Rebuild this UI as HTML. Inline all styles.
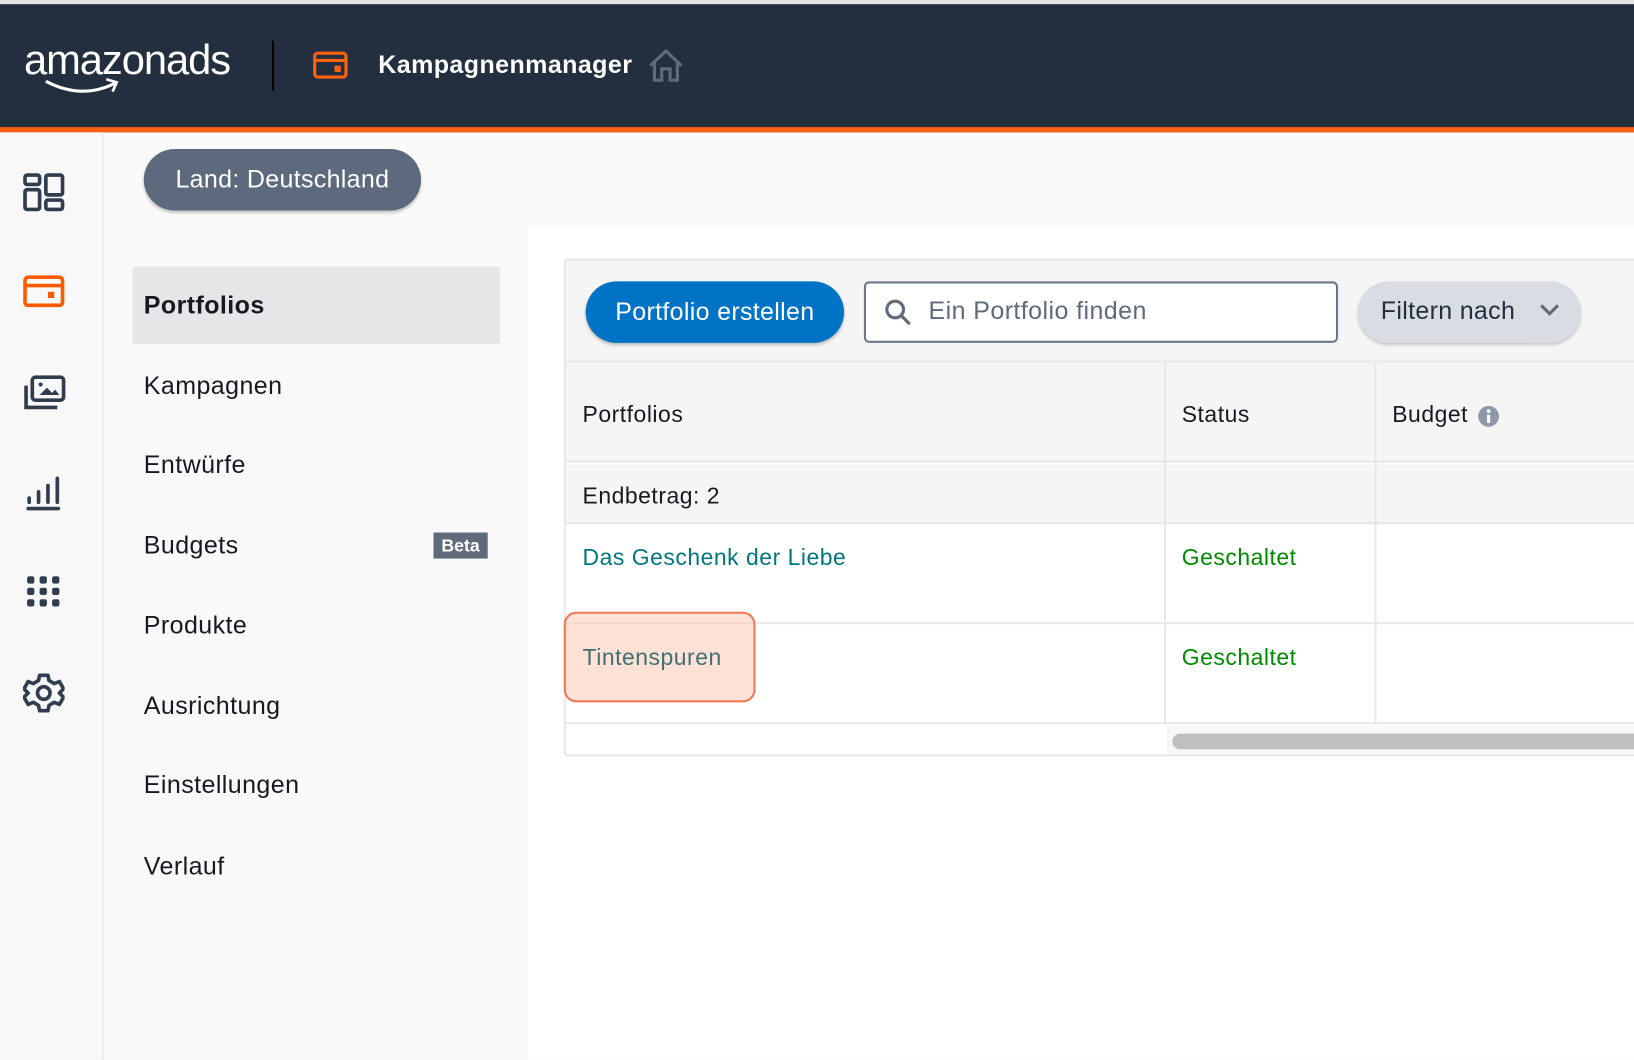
<!DOCTYPE html>
<html><head><meta charset="utf-8"><style>
*{box-sizing:border-box;margin:0;padding:0}
html,body{width:1634px;height:1060px;overflow:hidden;background:#fafafa;font-family:"Liberation Sans",sans-serif}
#w{position:absolute;left:0;top:0;width:1568px;height:1017px;transform:scale(1.04209);transform-origin:0 0}
.a{position:absolute}
.hdr{left:0;top:0;width:1568px;height:127px;background:#232f3e;border-top:4px solid #e3e3e3;border-bottom:5px solid #ff6112}
.side{left:0;top:127px;width:100px;height:890px;background:#f8f8f8;border-right:2px solid #ececec}
.nav{left:101px;top:218px;width:406px;height:799px;background:#f9f9f9}
.main{left:507px;top:218px;width:1061px;height:799px;background:#fff}
.navi{left:138px;font-size:24px;color:#16191f;letter-spacing:0.4px}
.t{font-size:22px;color:#16191f;letter-spacing:0.5px}
</style></head><body><div id="w">
<div class="a hdr"></div>
<div class="a" style="left:23px;top:36px;color:#fff;font-size:40px;letter-spacing:-1px">amazonads</div>
<svg class="a" style="left:42px;top:74px" width="76" height="18"><path d="M2 4 Q36 22 68 6" stroke="#fff" stroke-width="3" fill="none"/><path d="M60 2 L70 5 L66 14" stroke="#fff" stroke-width="2.5" fill="none"/></svg>
<div class="a" style="left:261px;top:39px;width:2px;height:48px;background:#000"></div>
<svg class="a" style="left:300px;top:49px" width="34" height="28"><rect x="2" y="2" width="30" height="23" rx="3" stroke="#ff6112" stroke-width="3" fill="none"/><line x1="2" y1="9" x2="32" y2="9" stroke="#ff6112" stroke-width="3"/><rect x="21" y="14" width="6" height="6" fill="#ff6112"/></svg>
<div class="a" style="left:363px;top:49px;color:#fff;font-size:24px;font-weight:bold;letter-spacing:0.4px">Kampagnenmanager</div>
<svg class="a" style="left:621px;top:46px" width="36" height="34"><path d="M3 17 L18 3 L33 17 M7 14 V31 H14 V20 H22 V31 H29 V14" stroke="#5f6b7a" stroke-width="3" fill="none"/></svg>
<div class="a side"></div>
<svg class="a" style="left:22px;top:166px" width="40" height="38" fill="none" stroke="#313d4f" stroke-width="3.5"><rect x="2" y="2" width="14" height="9" rx="2"/><rect x="2" y="16" width="14" height="19" rx="2"/><rect x="22" y="2" width="16" height="19" rx="2"/><rect x="22" y="26" width="16" height="9" rx="2"/></svg>
<svg class="a" style="left:22px;top:264px" width="40" height="32" fill="none" stroke="#ff5a00" stroke-width="3.5"><rect x="2" y="2" width="36" height="27" rx="3"/><line x1="2" y1="10" x2="38" y2="10"/><rect x="24" y="16" width="6" height="6" fill="#ff5a00" stroke="none"/></svg>
<svg class="a" style="left:22px;top:360px" width="42" height="34" fill="none" stroke="#313d4f" stroke-width="3.5"><rect x="9" y="2" width="30" height="22" rx="3"/><path d="M3 10 V31 H33"/><path d="M16 19 L23 12 L28 17 L31 14 L35 19 Z" fill="#313d4f" stroke="none"/><circle cx="17" cy="9" r="2" fill="#313d4f" stroke="none"/></svg>
<svg class="a" style="left:24px;top:456px" width="36" height="34" stroke="#313d4f" stroke-width="3.5" stroke-linecap="round"><line x1="4" y1="22" x2="4" y2="26"/><line x1="13" y1="16" x2="13" y2="26"/><line x1="22" y1="10" x2="22" y2="26"/><line x1="31" y1="3" x2="31" y2="26"/><line x1="3" y1="32" x2="32" y2="32"/></svg>
<svg class="a" style="left:24px;top:551px" width="36" height="34" fill="#313d4f"><rect x="2" y="2" width="7" height="7" rx="2"/><rect x="14" y="2" width="7" height="7" rx="2"/><rect x="26" y="2" width="7" height="7" rx="2"/><rect x="2" y="13" width="7" height="7" rx="2"/><rect x="14" y="13" width="7" height="7" rx="2"/><rect x="26" y="13" width="7" height="7" rx="2"/><rect x="2" y="24" width="7" height="7" rx="2"/><rect x="14" y="24" width="7" height="7" rx="2"/><rect x="26" y="24" width="7" height="7" rx="2"/></svg>
<svg class="a" style="left:22px;top:645px" width="40" height="40" fill="none" stroke="#313d4f" stroke-width="3.5" stroke-linejoin="round"><path d="M16 3 H24 L25 8 L30 11 L35 9 L39 16 L35 20 L35 20 L39 24 L35 31 L30 29 L25 32 L24 37 H16 L15 32 L10 29 L5 31 L1 24 L5 20 L1 16 L5 9 L10 11 L15 8 Z"/><circle cx="20" cy="20" r="6"/></svg>
<div class="a nav"></div>
<div class="a main"></div>
<div class="a" style="left:138px;top:143px;width:266px;height:59px;border-radius:30px;background:#5d6a7d;box-shadow:0 2px 3px rgba(0,0,0,.25);color:#fff;font-size:24px;line-height:59px;text-align:center;letter-spacing:0.3px">Land: Deutschland</div>
<div class="a" style="left:127px;top:256px;width:353px;height:74px;background:#e5e6e8;border-radius:3px"></div>
<div class="a navi" style="top:280px;font-weight:bold">Portfolios</div>
<div class="a navi" style="top:357px">Kampagnen</div>
<div class="a navi" style="top:433px">Entwürfe</div>
<div class="a navi" style="top:510px">Budgets</div>
<div class="a" style="left:416px;top:511px;width:52px;height:25px;background:#5f6b7a;color:#fff;font-size:17px;font-weight:bold;text-align:center;line-height:25px">Beta</div>
<div class="a navi" style="top:587px">Produkte</div>
<div class="a navi" style="top:664px">Ausrichtung</div>
<div class="a navi" style="top:740px">Einstellungen</div>
<div class="a navi" style="top:818px">Verlauf</div>
<div class="a" style="left:541px;top:248px;width:1040px;height:478px;border:2px solid #e8e8e8;border-radius:4px;background:#fff;overflow:hidden">
 <div class="a" style="left:0;top:0;width:1040px;height:98px;background:#f5f5f5;border-bottom:2px solid #e8e8e8"></div>
 <div class="a" style="left:0;top:98px;width:1040px;height:96px;background:#f5f5f5;border-bottom:2px solid #e8e8e8"></div>
 <div class="a" style="left:0;top:196px;width:1040px;height:57px;background:#f5f5f5;border-bottom:2px solid #e8e8e8"></div>
 <div class="a" style="left:0;top:253px;width:1040px;height:96px;border-bottom:2px solid #e8e8e8"></div>
 <div class="a" style="left:0;top:349px;width:1040px;height:96px;border-bottom:2px solid #e8e8e8"></div>
 <div class="a" style="left:574px;top:98px;width:2px;height:347px;background:#e8e8e8"></div>
 <div class="a" style="left:776px;top:98px;width:2px;height:347px;background:#e8e8e8"></div>
 <div class="a" style="left:576px;top:447px;width:470px;height:29px;background:#f7f7f7"></div>
 <div class="a" style="left:582px;top:454px;width:460px;height:15px;border-radius:8px;background:#bfbfbf"></div>
</div>
<div class="a" style="left:562px;top:270px;width:248px;height:59px;border-radius:30px;background:#0073c7;box-shadow:0 2px 3px rgba(0,0,0,.25);color:#fff;font-size:24px;line-height:59px;text-align:center;letter-spacing:0.3px">Portfolio erstellen</div>
<div class="a" style="left:829px;top:270px;width:455px;height:59px;border:2px solid #6b7889;border-radius:5px;background:#fff"></div>
<svg class="a" style="left:848px;top:286px" width="28" height="28" fill="none" stroke="#5f6b7a" stroke-width="3"><circle cx="11" cy="11" r="8"/><line x1="17" y1="17" x2="25" y2="25"/></svg>
<div class="a" style="left:891px;top:285px;font-size:24px;color:#5f6b7a;letter-spacing:0.4px">Ein Portfolio finden</div>
<div class="a" style="left:1303px;top:270px;width:214px;height:59px;border-radius:30px;background:#d9dde3;box-shadow:0 2px 3px rgba(0,0,0,.2)"></div>
<div class="a" style="left:1325px;top:285px;font-size:24px;color:#232f3e;letter-spacing:0.3px">Filtern nach</div>
<svg class="a" style="left:1477px;top:290px" width="20" height="14" fill="none" stroke="#5f6b7a" stroke-width="3"><path d="M2 3 L10 11 L18 3"/></svg>
<div class="a t" style="left:559px;top:385px">Portfolios</div>
<div class="a t" style="left:1134px;top:385px">Status</div>
<div class="a t" style="left:1336px;top:385px">Budget</div>
<svg class="a" style="left:1418px;top:389px" width="21" height="21"><circle cx="10.5" cy="10.5" r="10" fill="#8d99a8"/><rect x="9" y="9" width="3" height="8" fill="#fff"/><circle cx="10.5" cy="5.5" r="1.8" fill="#fff"/></svg>
<div class="a t" style="left:559px;top:463px">Endbetrag: 2</div>
<div class="a t" style="left:559px;top:522px;color:#00777e">Das Geschenk der Liebe</div>
<div class="a t" style="left:1134px;top:522px;color:#008a00">Geschaltet</div>
<div class="a" style="left:541px;top:587px;width:184px;height:87px;border:2px solid #ee7b56;border-radius:12px;background:rgba(255,200,180,.55)"></div>
<div class="a t" style="left:559px;top:618px;color:#3f6f74">Tintenspuren</div>
<div class="a t" style="left:1134px;top:618px;color:#008a00">Geschaltet</div>
</div></body></html>
